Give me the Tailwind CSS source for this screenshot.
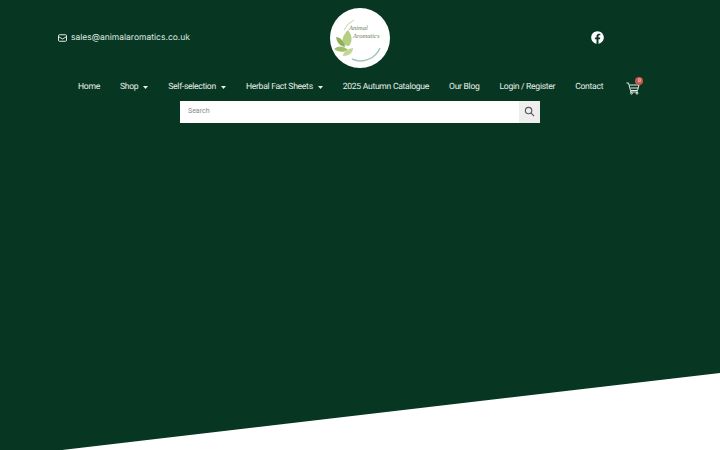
<!DOCTYPE html>
<html lang="en">
<head>
    <meta charset="UTF-8">
    <title>Animal Aromatics</title>
    <script src="https://cdn.jsdelivr.net/npm/@tailwindcss/browser@4"></script>
</head>
<body class="bg-[#073723] font-['Roboto',sans-serif] overflow-hidden [text-rendering:geometricPrecision]">
    <div class="relative w-[720px] h-[450px] overflow-hidden">
        <!-- top row -->
        <header class="flex items-center h-[75px] pl-[58px]">
            <div class="flex items-center gap-[4px] w-[272px] text-[#dfeae2]">
                <svg class="w-[9px] h-[8px] shrink-0" viewBox="0 0 18 15" fill="none" stroke="#dfeae2" stroke-width="2"><rect x="1" y="1" width="16" height="13" rx="2"/><path d="M1.500 5 L9 9.500 L16.500 5"/></svg>
                <a class="pt-[1px] text-[8.500px] font-['Inter',sans-serif] whitespace-nowrap">sales@animalaromatics.co.uk</a>
            </div>
            <!-- logo -->
            <div class="w-[60px] h-[60px] rounded-full bg-white relative shrink-0">
                <svg class="w-[60px] h-[60px]" viewBox="0 0 60 60">
                    <path d="M14 22 A21 21 0 0 1 24 12" fill="none" stroke="#b9cba6" stroke-width="0.900"/>
                    <path d="M50 40 A21 21 0 0 1 22 51" fill="none" stroke="#9fc9bc" stroke-width="1.500"/>
                    <path d="M13 37 C11 31 14 26 18 22 C22 27 23 33 19 38 Z" fill="#b4cf82"/>
                    <path d="M4 41 C9 37 14 38 18 42 C13 45 8 44 4 41 Z" fill="#a3bf6c"/>
                    <path d="M6 29 C10 29 14 33 15 39 C10 38 7 35 6 29 Z" fill="#8fb05a"/>
                    <path d="M13 48 C13 44 17 41 23 40 C23 45 19 48 13 48 Z" fill="#c3d893"/>
                </svg>
                <span class="absolute left-[19px] top-[17px] text-[6.500px] leading-[8px] italic text-[#6a7d58] font-['Liberation_Serif',serif]">Animal</span>
                <span class="absolute left-[23px] top-[25px] text-[6.500px] leading-[8px] italic text-[#6a7d58] font-['Liberation_Serif',serif]">Aromatics</span>
            </div>
            <svg class="w-[13px] h-[13px] ml-[201px]" viewBox="0 0 512 512" fill="#ffffff"><path d="M504 256C504 119 393 8 256 8S8 119 8 256c0 123.780 90.690 226.380 209.250 245V327.690h-63V256h63v-54.640c0-62.150 37-96.480 93.670-96.480 27.140 0 55.520 4.840 55.520 4.840v61h-31.280c-30.800 0-40.410 19.120-40.410 38.730V256h68.780l-11 71.690h-57.780V501C413.310 482.380 504 379.780 504 256z"/></svg>
        </header>

        <!-- nav -->
        <nav class="flex items-center h-[24px] pt-[1px] pl-[78px] text-[#e6efe9] text-[8.600px] tracking-[-0.3px] leading-none whitespace-nowrap">
            <a class="mr-[20px]">Home</a>
            <a class="flex items-center gap-[5px] mr-[20px]">Shop <svg class="w-[5px] h-[3px]" viewBox="0 0 10 6" fill="#e6efe9"><path d="M0 0h10L5 6z"/></svg></a>
            <a class="flex items-center gap-[5px] mr-[20px]">Self-selection <svg class="w-[5px] h-[3px]" viewBox="0 0 10 6" fill="#e6efe9"><path d="M0 0h10L5 6z"/></svg></a>
            <a class="flex items-center gap-[5px] mr-[20px]">Herbal Fact Sheets <svg class="w-[5px] h-[3px]" viewBox="0 0 10 6" fill="#e6efe9"><path d="M0 0h10L5 6z"/></svg></a>
            <a class="mr-[20px]">2025 Autumn Catalogue</a>
            <a class="mr-[20px]">Our Blog</a>
            <a class="mr-[20px]">Login / Register</a>
            <a>Contact</a>
            <div class="relative ml-[23px] w-[14px] h-[14px] shrink-0">
                <svg class="w-[14px] h-[14px]" viewBox="0 0 28 26" fill="none" stroke="#e6efe9" stroke-width="2"><path d="M1 3h4l4 15h14l3-11H7"/><path d="M9 13h15M10 18l-1 3h15"/><circle cx="11" cy="23.500" r="1.800"/><circle cx="22" cy="23.500" r="1.800"/></svg>
                <span class="absolute -top-[4px] left-[9px] w-[8px] h-[8px] rounded-full bg-[#c9574f] text-white text-[5px] leading-[8px] text-center">0</span>
            </div>
        </nav>

        <!-- search -->
        <form class="flex w-[360px] h-[22px] mx-auto mt-[1.500px] bg-white">
            <input class="flex-1 min-w-0 pl-[8px] text-[7px] placeholder:text-[#8a8a8a] outline-none" placeholder="Search">
            <button type="button" class="w-[21px] h-[22px] flex items-center justify-center bg-[#eeeeee]">
                <svg class="w-[11px] h-[11px]" viewBox="0 0 24 24" fill="none" stroke="#555555" stroke-width="2.500"><circle cx="10" cy="10" r="7"/><path d="M15 15l7 7"/></svg>
            </button>
        </form>

        <!-- diagonal shape at the bottom -->
        <svg class="absolute left-0 top-0 w-[720px] h-[450px] pointer-events-none" viewBox="0 0 720 450"><path d="M62 450 L720 373 V450 Z" fill="#ffffff"/></svg>
    </div>
</body>
</html>
